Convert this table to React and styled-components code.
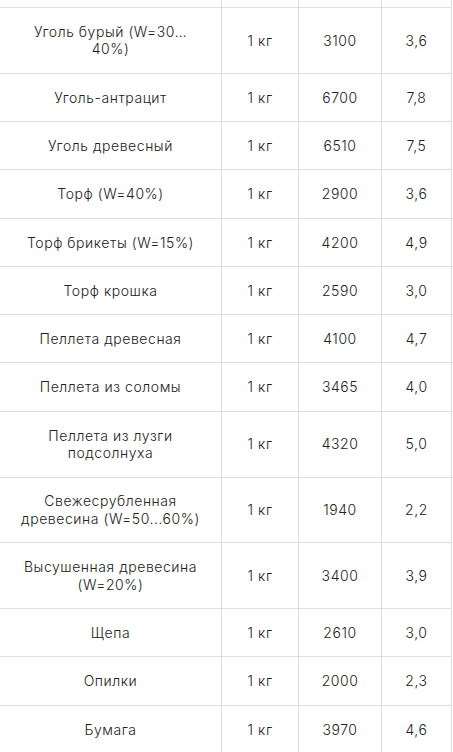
import React from "react";
import styled, { createGlobalStyle } from "styled-components";

const rows = [
  ["Уголь бурый (W=30…40%)", "1 кг", "3100", "3,6"],
  ["Уголь-антрацит", "1 кг", "6700", "7,8"],
  ["Уголь древесный", "1 кг", "6510", "7,5"],
  ["Торф (W=40%)", "1 кг", "2900", "3,6"],
  ["Торф брикеты (W=15%)", "1 кг", "4200", "4,9"],
  ["Торф крошка", "1 кг", "2590", "3,0"],
  ["Пеллета древесная", "1 кг", "4100", "4,7"],
  ["Пеллета из соломы", "1 кг", "3465", "4,0"],
  ["Пеллета из лузги подсолнуха", "1 кг", "4320", "5,0"],
  ["Свежесрубленная древесина (W=50...60%)", "1 кг", "1940", "2,2"],
  ["Высушенная древесина (W=20%)", "1 кг", "3400", "3,9"],
  ["Щепа", "1 кг", "2610", "3,0"],
  ["Опилки", "1 кг", "2000", "2,3"],
  ["Бумага", "1 кг", "3970", "4,6"],
];

const widths = [222, 77, 83, 70];

export default function App() {
  return (
    <Page>
      <GlobalStyle />
      <Table>
        <colgroup>
          {widths.map((w, i) => (
            <col key={i} style={{ width: w }} />
          ))}
        </colgroup>
        <tbody>
          {/* хвост предыдущей строки */}
          <tr>
            {widths.map((w, i) => (
              <Tail key={i} />
            ))}
          </tr>
          {rows.map((r, i) => (
            <tr key={i}>
              {r.map((c, j) => (
                <Cell key={j}>{c}</Cell>
              ))}
            </tr>
          ))}
        </tbody>
      </Table>
    </Page>
  );
}

const GlobalStyle = createGlobalStyle`
  body {
    margin: 0;
    background: #ffffff;
    font-family: Inter, "Liberation Sans", sans-serif;
    overflow: hidden;
  }
`;

const Page = styled.div`
  width: 453px;
  height: 752px;
  overflow: hidden;
`;

const Table = styled.table`
  width: 452px;
  table-layout: fixed;
  border-collapse: separate;
  border-spacing: 0;
`;

const Tail = styled.td`
  height: 7px;
  padding: 0;
  border-right: 1px solid #dedede;
  border-bottom: 1px solid #dedede;
`;

const Cell = styled.td`
  padding: 14.9px 19px;
  border-right: 1px solid #dedede;
  border-bottom: 1px solid #dedede;
  text-align: center;
  vertical-align: middle;
  font-size: 14px;
  font-weight: 300;
  letter-spacing: 0.55px;
  line-height: 17.5px;
  color: #222222;
`;
